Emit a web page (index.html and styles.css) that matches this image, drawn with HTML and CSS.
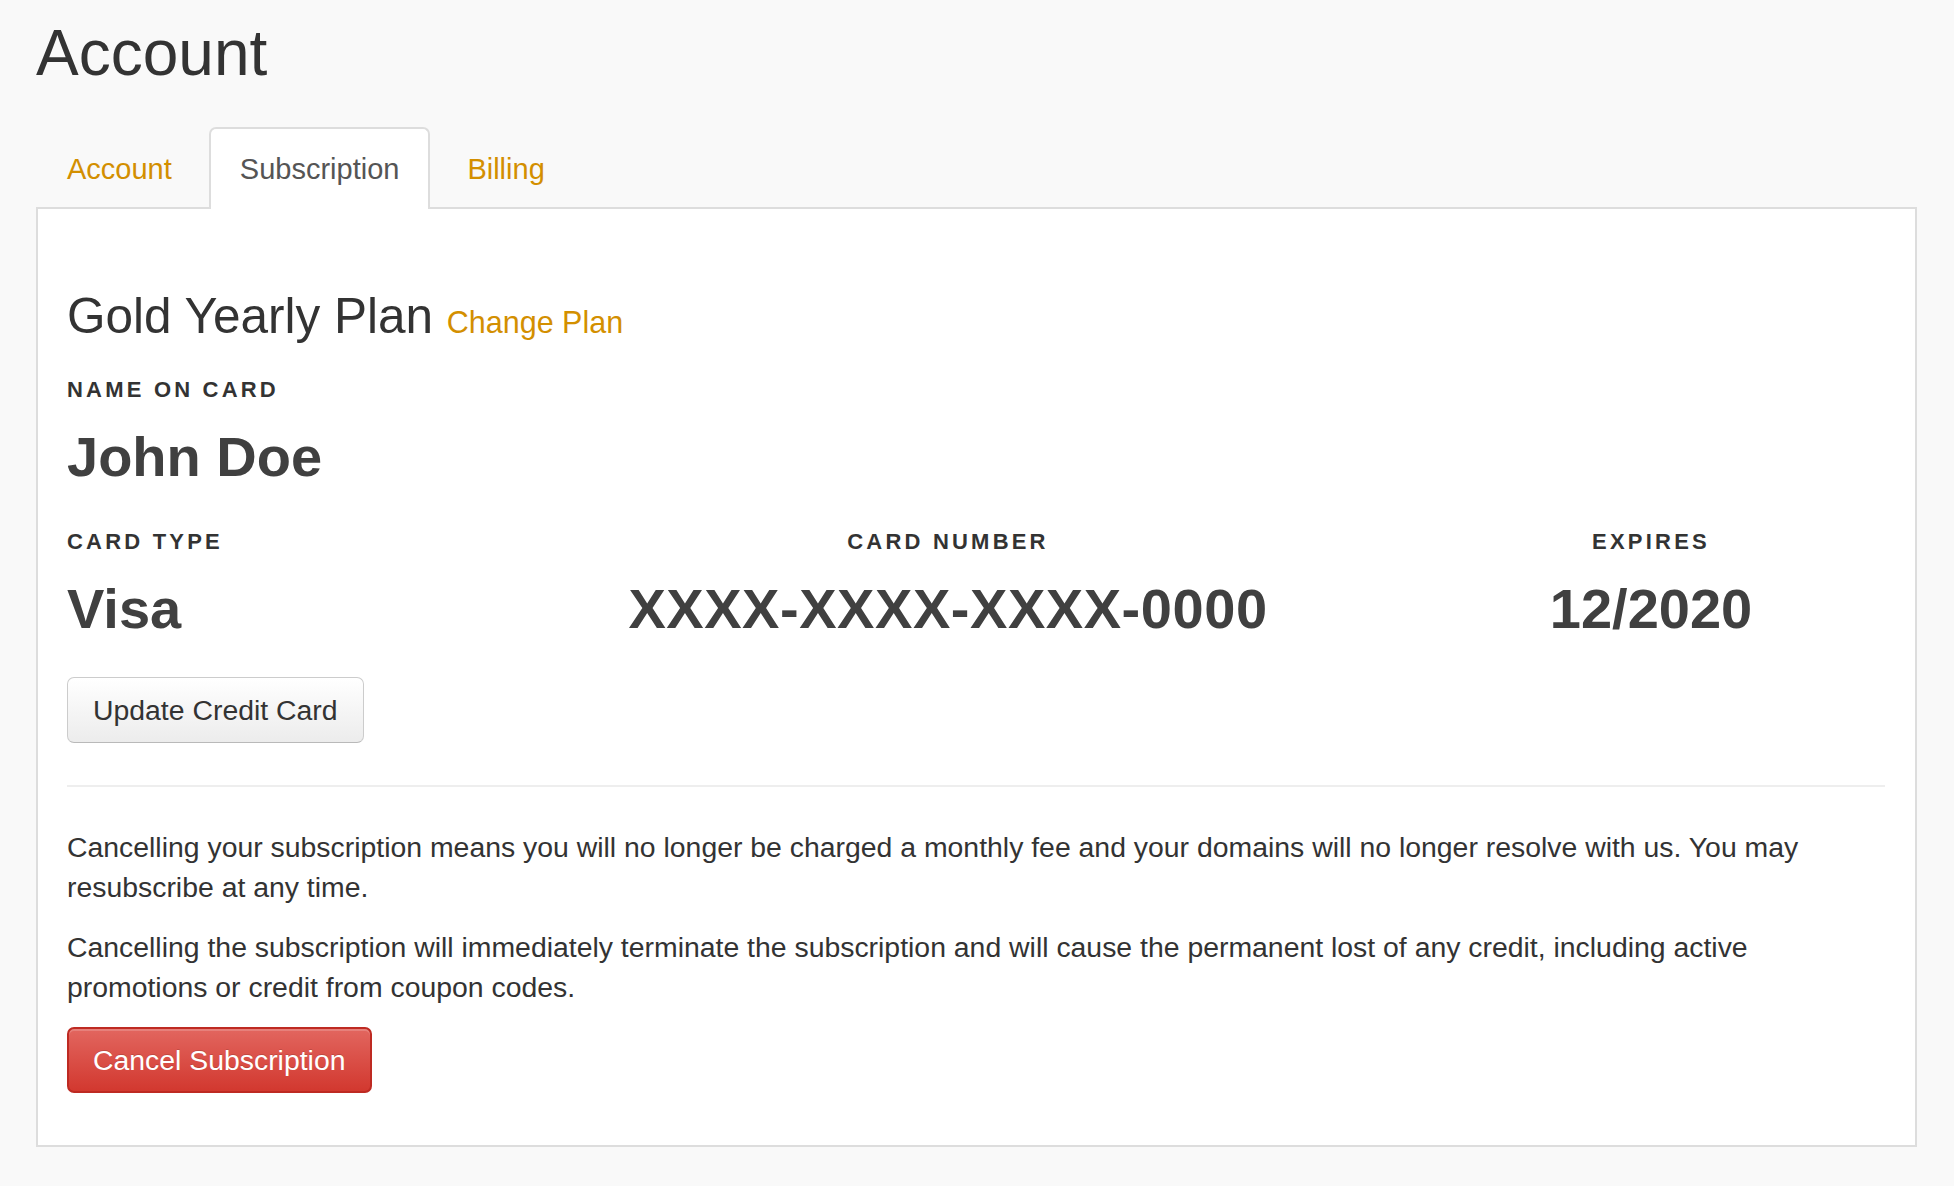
FILE: index.html
```html
<!DOCTYPE html>
<html lang="en">
<head>
<meta charset="utf-8">
<title>Account</title>
<link rel="stylesheet" href="styles.css">
</head>
<body>
<div class="page">
  <h1 class="page-title">Account</h1>
  <ul class="tabs">
    <li class="tab"><a href="#">Account</a></li>
    <li class="tab active"><a href="#">Subscription</a></li>
    <li class="tab"><a href="#">Billing</a></li>
  </ul>
  <div class="panel">
    <h2 class="plan">Gold Yearly Plan <a class="plan-link" href="#">Change Plan</a></h2>
    <div class="field name-field">
      <div class="label">NAME ON CARD</div>
      <div class="value">John Doe</div>
    </div>
    <div class="card-grid">
      <div class="field">
        <div class="label">CARD TYPE</div>
        <div class="value">Visa</div>
      </div>
      <div class="field center">
        <div class="label">CARD NUMBER</div>
        <div class="value card-number">XXXX-XXXX-XXXX-0000</div>
      </div>
      <div class="field center">
        <div class="label">EXPIRES</div>
        <div class="value">12/2020</div>
      </div>
    </div>
    <button class="btn btn-default update-btn" type="button">Update Credit Card</button>
    <hr class="divider">
    <p class="note">Cancelling your subscription means you will no longer be charged a monthly fee and your domains will no longer resolve with us. You may resubscribe at any time.</p>
    <p class="note">Cancelling the subscription will immediately terminate the subscription and will cause the permanent lost of any credit, including active promotions or credit from coupon codes.</p>
    <button class="btn btn-danger" type="button">Cancel Subscription</button>
  </div>
</div>
</body>
</html>
```

FILE: styles.css
```css
html, body {
  margin: 0;
  padding: 0;
}

body {
  background: #f9f9f9;
  font-family: "Liberation Sans", Arial, Helvetica, sans-serif;
  color: #333;
}

.page {
  padding: 19px 37px 0 36px;
}

.page-title {
  margin: 0;
  font-size: 64px;
  line-height: 69px;
  font-weight: normal;
  color: #333;
}

.tabs {
  list-style: none;
  margin: 39px 0 0 0;
  padding: 0;
  display: flex;
}

.tab {
  position: relative;
  z-index: 1;
  margin-right: 6px;
  margin-bottom: -2px;
  border: 2px solid transparent;
  border-bottom: 0;
  border-radius: 7px 7px 0 0;
}

.tab a {
  display: block;
  padding: 20px 29px;
  font-size: 29px;
  line-height: 40px;
  color: #d38f00;
  text-decoration: none;
}

.tab.active {
  background: #fff;
  border-color: #ddd;
}

.tab.active a {
  color: #555;
}

.panel {
  background: #fff;
  border: 2px solid #ddd;
  padding: 81px 30px 52px 29px;
}

.plan {
  margin: 0;
  font-size: 49.5px;
  line-height: 52px;
  font-weight: normal;
  color: #333;
}

.plan-link {
  font-size: 30.5px;
  color: #d38f00;
  text-decoration: none;
}

.name-field {
  margin-top: 27px;
}

.label {
  font-size: 22px;
  line-height: 30px;
  font-weight: bold;
  letter-spacing: 3.2px;
  color: #333;
  margin-bottom: 20px;
}

.value {
  font-size: 56px;
  line-height: 64px;
  font-weight: bold;
  color: #404040;
}

.card-number {
  letter-spacing: 0.55px;
}

.card-grid {
  margin-top: 38px;
  display: grid;
  grid-template-columns: 412fr 938fr 468fr;
}

.field.center {
  text-align: center;
}

.btn {
  display: block;
  font-family: "Liberation Sans", Arial, Helvetica, sans-serif;
  font-size: 28.4px;
  line-height: 40px;
  padding: 12px 25px;
  border-radius: 7px;
  cursor: pointer;
}

.btn-default {
  color: #333;
  background: linear-gradient(#ffffff, #ececec);
  border: 1px solid #ccc;
  border-bottom-color: #b9b9b9;
  box-shadow: inset 0 1px 0 rgba(255, 255, 255, 0.8);
}

.update-btn {
  margin-top: 36px;
}

.divider {
  margin: 42px 0 40px;
  border: 0;
  border-top: 2px solid #eeeeee;
  height: 0;
}

.note {
  margin: 0 0 20px;
  font-size: 28.4px;
  line-height: 40px;
  color: #333;
}

.btn-danger {
  color: #fff;
  background: linear-gradient(#e2665f, #d2382f);
  border: 2px solid #be2a22;
  padding: 11px 24px;
  box-shadow: inset 0 2px 0 rgba(255, 255, 255, 0.18);
  text-shadow: 0 -1px 0 rgba(0, 0, 0, 0.15);
}
```
